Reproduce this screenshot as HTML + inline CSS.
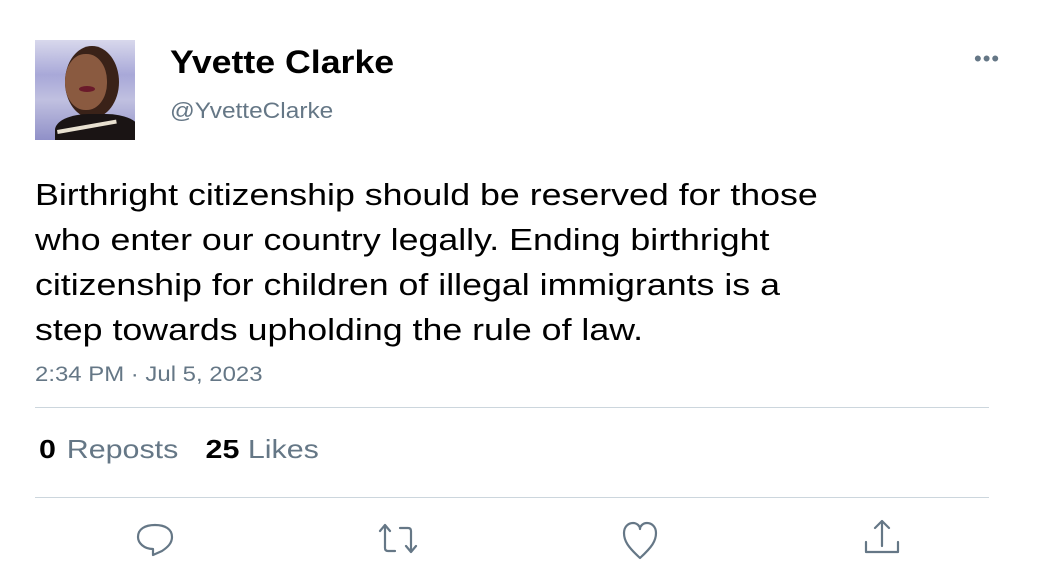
<!DOCTYPE html>
<html><head><style>
body{margin:0;width:1050px;height:570px;background:#fff;font-family:"Liberation Sans",Arial,sans-serif;position:relative;overflow:hidden}
.a{position:absolute;white-space:nowrap;transform-origin:0 0}
</style></head><body>
<div class="a" style="left:35px;top:40px;width:100px;height:100px;background:linear-gradient(180deg,#d8d8ec 0%,#a8a8d8 35%,#c0c0e0 60%,#9090c8 100%);overflow:hidden">
 <div class="a" style="left:30px;top:6px;width:54px;height:72px;border-radius:50%;background:#3a2218"></div>
 <div class="a" style="left:30px;top:14px;width:42px;height:56px;border-radius:48%;background:#8a5a40"></div>
 <div class="a" style="left:44px;top:46px;width:16px;height:6px;border-radius:50%;background:#6a1a2a"></div>
 <div class="a" style="left:20px;top:74px;width:85px;height:40px;border-radius:40% 40% 0 0;background:#1a1414"></div>
 <div class="a" style="left:22px;top:90px;width:60px;height:4px;background:#e8e0d0;transform:rotate(-10deg)"></div>
</div>
<div class="a" style="left:170px;top:44px;font-size:32px;font-weight:bold;color:#000;transform:scaleX(1.115)">Yvette Clarke</div>
<div class="a" style="left:170px;top:98px;font-size:22px;color:#657786;transform:scaleX(1.11)">@YvetteClarke</div>
<div class="a" style="left:974px;top:46px;font-size:22px;color:#657786;letter-spacing:1px">•••</div>
<div class="a" style="left:35px;top:172px;font-size:31px;line-height:45px;color:#000;transform:scaleX(1.153)">Birthright citizenship should be reserved for those<br>who enter our country legally. Ending birthright<br>citizenship for children of illegal immigrants is a<br>step towards upholding the rule of law.</div>
<div class="a" style="left:35px;top:363px;font-size:21px;color:#657786;transform:scaleX(1.14)">2:34 PM · Jul 5, 2023</div>
<div class="a" style="left:35px;top:407px;width:954px;height:1px;background:#ccd6dd"></div>
<div class="a" style="left:39px;top:434px;font-size:26px;color:#657786;transform:scaleX(1.17)"><b style="color:#000">0</b> <span style="margin-left:2px">Reposts</span> <b style="color:#000;margin-left:16px">25</b> Likes</div>
<div class="a" style="left:35px;top:497px;width:954px;height:1px;background:#ccd6dd"></div>
<svg class="a" style="left:0;top:515px" width="1050" height="50" fill="none" stroke="#657786" stroke-width="2.2" stroke-linecap="round" stroke-linejoin="round">
 <path d="M153 38 L153 32 C144 32 138 26 138 20 C138 12 145 8 155 8 C165 8 172 12 172 20 C172 26 168 30 162 34 Z" transform="translate(0,2)"/>
 <path d="M380 16 L385 10 L390 16 M385 10 V33 Q385 36 388 36 H395 M406 31 L411 37 L416 31 M411 37 V16 Q411 13 408 13 H400"/>
 <path d="M640 43 C628 32 624 26 624 18 C624 12 628 8 633 8 C637 8 640 11 640 14 C640 11 643 8 647 8 C652 8 656 12 656 18 C656 26 652 32 640 43 Z"/>
 <path d="M866 27 V37 H898 V27 M882 31 V6 M875 13 L882 6 L889 13"/>
</svg>
</body></html>
